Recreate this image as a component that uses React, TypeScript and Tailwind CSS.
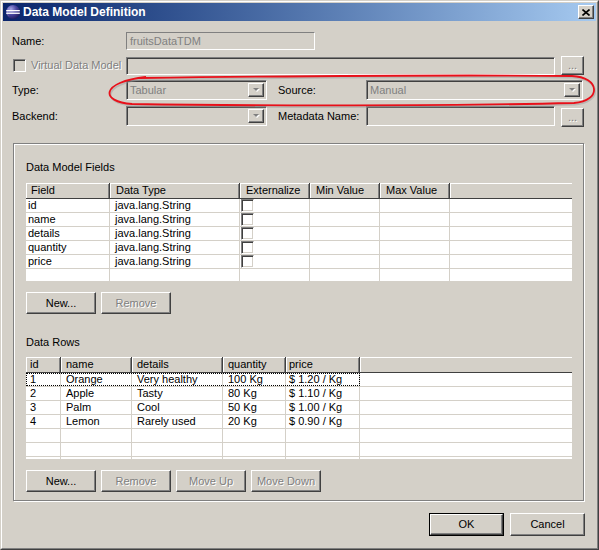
import React from "react";

const raised =
  "border border-t-white border-l-white border-r-[#404040] border-b-[#404040] shadow-[inset_-1px_-1px_0_#808080] bg-[#d4d0c8]";
const sunken =
  "border border-t-[#808080] border-l-[#808080] border-r-white border-b-white shadow-[inset_1px_1px_0_#404040,inset_-1px_-1px_0_#d4d0c8]";
const embossed = "text-[#808080] [text-shadow:1px_1px_0_#fff]";

interface PushButtonProps {
  label: string;
  disabled?: boolean;
  className: string;
}

const PushButton = ({ label, disabled, className }: PushButtonProps) => (
  <div className={`flex shrink-0 items-center justify-center ${raised} ${className}`}>
    <span className={disabled ? embossed : "text-black"}>{label}</span>
  </div>
);

const DropArrow = () => (
  <div className={`flex h-full w-[16px] shrink-0 items-center justify-center ${raised}`}>
    <svg width="9" height="6" viewBox="0 0 9 6">
      <path d="M2 2h6l-3 3z" fill="#fff" />
      <path d="M1 1h6l-3 3z" fill="#808080" />
    </svg>
  </div>
);

const Combo = ({ value, className }: { value: string; className: string }) => (
  <div className={`flex shrink-0 items-center bg-[#d4d0c8] p-[2px] ${sunken} ${className}`}>
    <span className="flex-1 pl-[1px] text-[#808080]">{value}</span>
    <DropArrow />
  </div>
);

interface Column {
  label: string;
  width: string;
  headPad: string;
  bodyPad: string;
}

const fieldColumns: Column[] = [
  { label: "Field", width: "w-[84px]", headPad: "pl-[5px]", bodyPad: "pl-[2px]" },
  { label: "Data Type", width: "w-[130px]", headPad: "pl-[6px]", bodyPad: "pl-[5px]" },
  { label: "Externalize", width: "w-[70px]", headPad: "pl-[6px]", bodyPad: "pl-[1px]" },
  { label: "Min Value", width: "w-[70px]", headPad: "pl-[6px]", bodyPad: "pl-[5px]" },
  { label: "Max Value", width: "w-[70px]", headPad: "pl-[6px]", bodyPad: "pl-[5px]" },
];

const rowColumns: Column[] = [
  { label: "id", width: "w-[35px]", headPad: "pl-[4px]", bodyPad: "pl-[4px]" },
  { label: "name", width: "w-[71px]", headPad: "pl-[5px]", bodyPad: "pl-[5px]" },
  { label: "details", width: "w-[91px]", headPad: "pl-[5px]", bodyPad: "pl-[5px]" },
  { label: "quantity", width: "w-[63px]", headPad: "pl-[5px]", bodyPad: "pl-[5px]" },
  { label: "price", width: "w-[74px]", headPad: "pl-[3px]", bodyPad: "pl-[3px]" },
];

const fields = ["id", "name", "details", "quantity", "price"];

const dataRows = [
  ["1", "Orange", "Very healthy", "100 Kg", "$ 1.20 / Kg"],
  ["2", "Apple", "Tasty", "80 Kg", "$ 1.10 / Kg"],
  ["3", "Palm", "Cool", "50 Kg", "$ 1.00 / Kg"],
  ["4", "Lemon", "Rarely used", "20 Kg", "$ 0.90 / Kg"],
];

const TableHeader = ({ columns }: { columns: Column[] }) => (
  <div className="flex h-[16px] border-b border-[#404040] bg-[#d4d0c8]">
    {columns.map((c) => (
      <div
        key={c.label}
        className={`flex h-full shrink-0 items-center border-r border-[#404040] shadow-[inset_1px_1px_0_#fff,inset_-1px_0_0_#808080] ${c.width} ${c.headPad}`}
      >
        {c.label}
      </div>
    ))}
    <div className="h-full flex-1 shadow-[inset_1px_1px_0_#fff]" />
  </div>
);

const Checkbox = ({ disabled }: { disabled?: boolean }) => (
  <div
    className={`h-[13px] w-[13px] shrink-0 ${sunken} ${disabled ? "bg-[#d4d0c8]" : "bg-white"}`}
  />
);

const BodyCell = ({ col, children }: { col: Column; children?: React.ReactNode }) => (
  <div
    className={`flex h-full shrink-0 items-center overflow-hidden whitespace-nowrap border-r border-[#d4d0c8] ${col.width} ${col.bodyPad}`}
  >
    {children}
  </div>
);

const FieldsTable = () => (
  <div className="w-[546px] bg-white">
    <TableHeader columns={fieldColumns} />
    <div className="h-[82px] overflow-hidden">
      {[...fields, ""].map((f, i) => (
        <div key={i} className="flex h-[14px] border-b border-[#d4d0c8] leading-[13px]">
          <BodyCell col={fieldColumns[0]}>{f}</BodyCell>
          <BodyCell col={fieldColumns[1]}>{f ? "java.lang.String" : ""}</BodyCell>
          <BodyCell col={fieldColumns[2]}>{f ? <Checkbox /> : null}</BodyCell>
          <BodyCell col={fieldColumns[3]} />
          <BodyCell col={fieldColumns[4]} />
          <div className="flex-1" />
        </div>
      ))}
    </div>
  </div>
);

const RowsTable = () => (
  <div className="w-[546px] bg-white">
    <TableHeader columns={rowColumns} />
    <div className="h-[86px] overflow-hidden">
      {[...dataRows, [], [], []].map((r, i) => (
        <div key={i} className="flex h-[14px] border-b border-[#d4d0c8] leading-[13px]">
          <div
            className={`flex h-full ${i === 0 ? "outline outline-1 -outline-offset-1 outline-dotted outline-black" : ""}`}
          >
            {rowColumns.map((c, j) => (
              <BodyCell key={c.label} col={c}>
                {r[j] ?? ""}
              </BodyCell>
            ))}
          </div>
          <div className="flex-1" />
        </div>
      ))}
    </div>
  </div>
);

export default function App() {
  return (
    <div className="relative h-[550px] w-[599px] bg-[#d4d0c8] font-['Liberation_Sans',Arial,sans-serif] text-[11px] text-black">
      <div className="h-full w-full border border-t-[#d4d0c8] border-l-[#d4d0c8] border-r-[#404040] border-b-[#404040]">
        <div className="flex h-full w-full flex-col border border-t-white border-l-white border-r-[#808080] border-b-[#808080] p-px">
          {/* title bar */}
          <div className="flex h-[18px] shrink-0 items-center bg-linear-to-r from-[#0a246a] to-[#a6caf0] px-[2px]">
            <svg width="16" height="16" viewBox="0 0 16 16">
              <defs>
                <radialGradient id="ecl" cx="35%" cy="30%" r="75%">
                  <stop offset="0" stopColor="#a7a6e6" />
                  <stop offset="0.5" stopColor="#4c49a3" />
                  <stop offset="1" stopColor="#1f1b5c" />
                </radialGradient>
              </defs>
              <circle cx="8" cy="8" r="7" fill="url(#ecl)" />
              <path d="M4.5 3.2a6 6 0 0 0 0 9.6a7 7 0 0 1 0-9.6z" fill="#d8d6f4" opacity="0.6" />
              <rect x="1.2" y="6" width="13.6" height="1.3" fill="#fff" />
              <rect x="1.2" y="8.6" width="13.6" height="1.3" fill="#fff" />
            </svg>
            <span className="ml-[2px] text-[12px] font-bold text-white">Data Model Definition</span>
            <div className={`ml-auto flex h-[14px] w-[16px] items-center justify-center ${raised}`}>
              <svg width="8" height="7" viewBox="0 0 8 7">
                <path d="M0.5 0.5l7 6M7.5 0.5l-7 6" stroke="#000" strokeWidth="1.6" />
              </svg>
            </div>
          </div>

          {/* content */}
          <div className="flex flex-1 flex-col px-[9px]">
            <div className="mt-[11px] flex h-[18px] items-center">
              <span className="w-[114px] shrink-0">Name:</span>
              <div className="flex h-[18px] w-[189px] items-center border border-t-[#808080] border-l-[#808080] border-r-white border-b-white pl-[3px] text-[#808080]">
                fruitsDataTDM
              </div>
            </div>

            <div className="mt-[6px] flex h-[19px] items-center">
              <div className="flex w-[114px] shrink-0 items-center pl-[1px]">
                <Checkbox disabled />
                <span className={`ml-[5px] ${embossed}`}>Virtual Data Model</span>
              </div>
              <div className={`h-[18px] w-[429px] shrink-0 bg-[#d4d0c8] ${sunken}`} />
              <PushButton label="..." disabled className="ml-[6px] h-[19px] w-[23px]" />
            </div>

            <div className="mt-[5px] flex h-[20px] items-center">
              <span className="w-[114px] shrink-0">Type:</span>
              <Combo value="Tabular" className="h-[20px] w-[141px]" />
              <span className="ml-[11px] w-[88px] shrink-0">Source:</span>
              <Combo value="Manual" className="h-[20px] w-[217px]" />
            </div>

            <div className="mt-[6px] flex h-[20px] items-center">
              <span className="w-[114px] shrink-0">Backend:</span>
              <Combo value="" className="h-[20px] w-[141px]" />
              <span className="ml-[11px] w-[88px] shrink-0">Metadata Name:</span>
              <div className={`h-[20px] w-[189px] shrink-0 bg-[#d4d0c8] ${sunken}`} />
              <PushButton label="..." disabled className="ml-[6px] mt-[2px] h-[19px] w-[23px]" />
            </div>

            {/* group */}
            <div className="ml-[1px] mt-[17px] flex h-[358px] w-[571px] shrink-0 flex-col border border-[#808080] pl-[12px] pt-[16px] shadow-[1px_1px_0_#fff,inset_1px_1px_0_#fff]">
              <div className="h-[14px] leading-[14px]">Data Model Fields</div>
              <div className="mt-[9px]">
                <FieldsTable />
              </div>
              <div className="mt-[11px] flex gap-[5px]">
                <PushButton label="New..." className="h-[22px] w-[70px]" />
                <PushButton label="Remove" disabled className="h-[22px] w-[70px]" />
              </div>

              <div className="mt-[21px] h-[14px] leading-[14px]">Data Rows</div>
              <div className="mt-[8px]">
                <RowsTable />
              </div>
              <div className="mt-[11px] flex gap-[5px]">
                <PushButton label="New..." className="h-[22px] w-[70px]" />
                <PushButton label="Remove" disabled className="h-[22px] w-[70px]" />
                <PushButton label="Move Up" disabled className="h-[22px] w-[70px]" />
                <PushButton label="Move Down" disabled className="h-[22px] w-[70px]" />
              </div>
            </div>

            {/* dialog buttons */}
            <div className="mt-[12px] flex justify-end gap-[6px] pr-[2px]">
              <div className="h-[23px] w-[75px] border border-black">
                <div className={`flex h-full w-full items-center justify-center ${raised}`}>OK</div>
              </div>
              <PushButton label="Cancel" className="h-[23px] w-[75px]" />
            </div>
          </div>
        </div>
      </div>

      {/* red annotation around Type / Source */}
      <svg className="pointer-events-none absolute left-0 top-0" width="599" height="550">
        <path
          d="M140 78 C300 76 480 75 572 76 C600 77 602 101 574 103 C450 106 260 106 132 104 C100 102 100 82 146 77"
          fill="none"
          stroke="#9a9a9a"
          strokeOpacity="0.45"
          strokeWidth="2"
          transform="translate(1 1.5)"
        />
        <path
          d="M140 78 C300 76 480 75 572 76 C600 77 602 101 574 103 C450 106 260 106 132 104 C100 102 100 82 146 77"
          fill="none"
          stroke="#e8101a"
          strokeWidth="1.8"
        />
      </svg>
    </div>
  );
}
